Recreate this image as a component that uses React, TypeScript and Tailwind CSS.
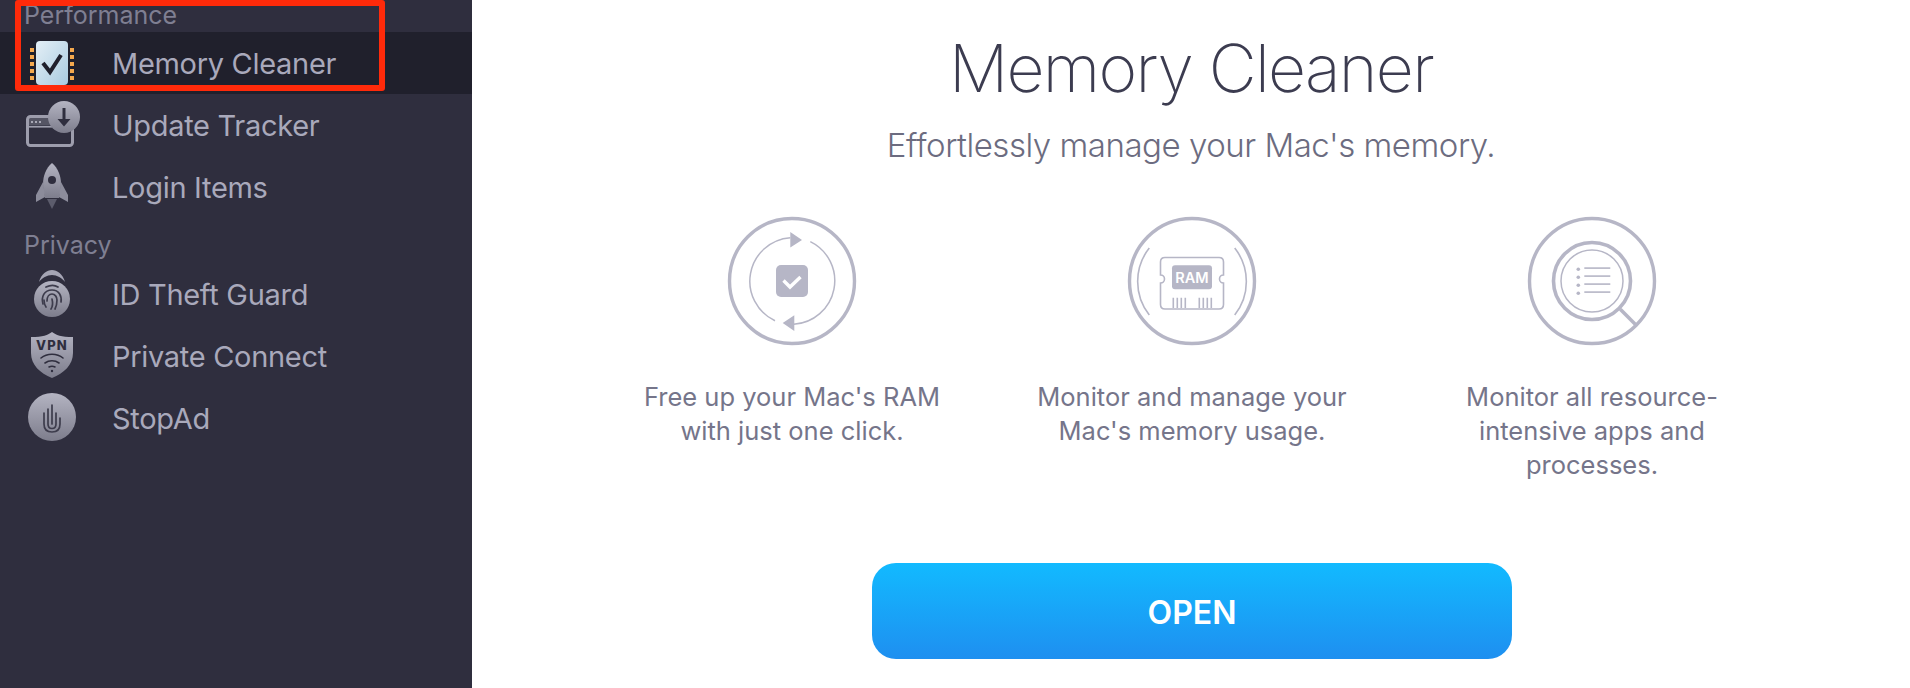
import React from 'react';

const iconGrey = '#b6b6c6';

function Defs() {
  return (
    <svg width="0" height="0" className="absolute">
      <defs>
        <linearGradient id="metal" x1="0" y1="0" x2="0" y2="1">
          <stop offset="0" stopColor="#b4b4c2" />
          <stop offset="1" stopColor="#7d7d8c" />
        </linearGradient>
        <linearGradient id="chip" x1="0" y1="0" x2="1" y2="1">
          <stop offset="0" stopColor="#e4eff6" />
          <stop offset="1" stopColor="#a9cbe0" />
        </linearGradient>
      </defs>
    </svg>
  );
}

function MemoryIcon() {
  return (
    <svg width="64" height="64" viewBox="0 0 64 64">
      {[19, 26, 33, 40, 47].map((y) => (
        <g key={y} fill="#f5a94e">
          <rect x="10" y={y - 2} width="4" height="4" />
          <rect x="50" y={y - 2} width="4" height="4" />
        </g>
      ))}
      <rect x="16" y="10" width="32" height="44" rx="4" fill="url(#chip)" />
      <path d="M23 32l7 9 11-17" fill="none" stroke="#20202c" strokeWidth="4" />
    </svg>
  );
}

function UpdateIcon() {
  return (
    <svg width="64" height="64" viewBox="0 0 64 64">
      <rect x="7.500" y="23.500" width="45" height="29" rx="3" fill="none" stroke="#9d9dac" strokeWidth="3" />
      <rect x="7.500" y="23.500" width="24" height="9" fill="#9d9dac" opacity="0.35" />
      <path d="M11 29h2m2 0h2m2 0h2" stroke="#c4c4d0" strokeWidth="1.400" />
      <rect x="7" y="33" width="25" height="1.600" fill="#9d9dac" />
      <circle cx="44" cy="24" r="16" fill="url(#metal)" />
      <path d="M44 15v15" stroke="#2f2e3e" strokeWidth="3" />
      <path d="M37.500 26l6.500 7.500 6.500-7.500z" fill="#2f2e3e" />
    </svg>
  );
}

function RocketIcon() {
  return (
    <svg width="64" height="64" viewBox="0 0 64 64">
      <path d="M32 8c-6 5-9 13-9 21 0 5 1 10 2 14h14c1-4 2-9 2-14 0-8-3-16-9-21z" fill="url(#metal)" />
      <path d="M23 27L16 40v7l9-5zM41 27l7 13v7l-9-5z" fill="#8c8c9b" />
      <path d="M27 44h10l-5 10z" fill="#5c5c6c" />
      <circle cx="32" cy="25" r="4" fill="#2f2e3e" />
    </svg>
  );
}

function GuardIcon() {
  return (
    <svg width="64" height="64" viewBox="0 0 64 64">
      <path d="M19 20c2-8 8-12 13-12s11 4 13 12c-3-4-8-7-13-7s-10 3-13 7z" fill="#a5a5b4" />
      <circle cx="32" cy="37" r="18" fill="url(#metal)" />
      <g fill="none" stroke="#3d3c4c" strokeWidth="1.700" strokeLinecap="round">
        <path d="M23 42c-2-7 1-14 9-14 7 0 10 6 9 12" />
        <path d="M26 45c-2-3-2-5-2-7" />
        <path d="M27 39c0-4 2-7 5-7s5 3 5 6c0 4-1 7-2 9" />
        <path d="M31 47c2-3 2-6 1-10" />
        <path d="M26 25c4-2 9-2 12 0" />
      </g>
    </svg>
  );
}

function VpnIcon() {
  return (
    <svg width="64" height="64" viewBox="0 0 64 64">
      <path d="M32 8c4 3 9 5 21 5v16c0 12-9 20-21 25-12-5-21-13-21-25V13c12 0 17-2 21-5z" fill="url(#metal)" />
      <text x="32" y="26" textAnchor="middle" fontSize="13" fontWeight="800" letterSpacing="1.200" fill="#2f2e3e" style={{ fontFamily: 'Inter, sans-serif' }}>
        VPN
      </text>
      <g fill="none" stroke="#2f2e3e" strokeWidth="1.600" strokeLinecap="round">
        <path d="M21 34c6-5 16-5 22 0" />
        <path d="M25 39c4-3 10-3 14 0" />
        <path d="M29 43c2-1 4-1 6 0" />
      </g>
      <circle cx="32" cy="47" r="1.200" fill="#2f2e3e" />
    </svg>
  );
}

function StopAdIcon() {
  return (
    <svg width="64" height="64" viewBox="0 0 64 64">
      <circle cx="32" cy="31" r="24" fill="url(#metal)" />
      <g fill="none" stroke="#3d3c4c" strokeWidth="1.700" strokeLinecap="round">
        <path d="M24 27v11c0 5 3 8 8 8s8-3 8-8v-6" />
        <path d="M28 23v15c0 3 2 4.500 4 4.500s4-1.500 4-4.500v-11" />
        <path d="M32 19v19" />
      </g>
    </svg>
  );
}

function RingIcon({ children }: { children: React.ReactNode }) {
  return (
    <svg width="132" height="132" viewBox="-66 -66 132 132" className="shrink-0">
      <circle r="62.500" fill="none" stroke={iconGrey} strokeWidth="3.400" />
      {children}
    </svg>
  );
}

function CleanIcon() {
  return (
    <RingIcon>
      <g fill="none" stroke={iconGrey} strokeWidth="1.500">
        <path d="M-1.700-43.300A43.600 43.600 0 0 0-17 39.700" />
        <path d="M18.300-39.400A43.600 43.600 0 0 1 1.700 43.300" />
      </g>
      <path d="M-1.700-49L10-41-1.700-33.500zM2.300 34.300V50L-9.300 42z" fill={iconGrey} />
      <rect x="-16" y="-16" width="32" height="32" rx="5" fill={iconGrey} />
      <path d="M-8.500-.5L-2 6 8.500-4" fill="none" stroke="#fff" strokeWidth="3.400" />
    </RingIcon>
  );
}

function RamIcon() {
  return (
    <RingIcon>
      <g fill="none" stroke={iconGrey} strokeWidth="1.600">
        <path d="M-42.700-33A54 54 0 0 0-42.700 34" />
        <path d="M42.700-33A54 54 0 0 1 42.700 34" />
        <path d="M-27-23.500H27Q31.500-23.500 31.500-19V-6A4 4 0 0 0 31.500 2V23.500Q31.500 28 27 28H-27Q-31.500 28-31.500 23.500V2A4 4 0 0 0-31.500-6V-19Q-31.500-23.500-27-23.500Z" />
        <path d="M-18.700 16.700V27M-14.700 16.700V27M-10.700 16.700V27M-6.700 16.700V27M7.300 16.700V27M11.300 16.700V27M15.300 16.700V27M19.300 16.700V27" />
      </g>
      <rect x="-20" y="-15.700" width="40" height="24" rx="3" fill={iconGrey} />
      <text x="0" y="1.500" textAnchor="middle" fontSize="14.500" fontWeight="600" fill="#fff" style={{ fontFamily: 'Inter, sans-serif' }}>
        RAM
      </text>
    </RingIcon>
  );
}

function ProcessIcon() {
  return (
    <RingIcon>
      <circle r="38.500" fill="none" stroke={iconGrey} strokeWidth="3.600" />
      <circle r="31" fill="none" stroke={iconGrey} strokeWidth="1.500" />
      <path d="M28.300 28.300L43.500 43.500" stroke={iconGrey} strokeWidth="3.600" />
      {[-13, -5, 3, 11].map((y) => (
        <g key={y}>
          <circle cx="-13.700" cy={y + 1.300} r="1.800" fill={iconGrey} />
          <rect x="-7.700" y={y - 0.700} width="26" height="1.600" fill={iconGrey} />
        </g>
      ))}
    </RingIcon>
  );
}

function NavItem({ icon, label, active }: { icon: React.ReactNode; label: string; active?: boolean }) {
  return (
    <div className={`flex h-[62px] items-center pl-5 ${active ? 'bg-[#20202c]' : ''}`}>
      <div className="h-16 w-16 shrink-0">{icon}</div>
      <span className="mt-[2px] ml-[28px] text-[29px] tracking-[-0.3px] text-[#a9a9bb]">{label}</span>
    </div>
  );
}

function Feature({ icon, children }: { icon: React.ReactNode; children: React.ReactNode }) {
  return (
    <div className="flex w-[400px] flex-col items-center">
      {icon}
      <p className="mt-[33px] text-center text-[25.500px] leading-[34px] text-[#75758a]">{children}</p>
    </div>
  );
}

export default function App() {
  return (
    <div className="relative flex h-[688px] w-[1910px] overflow-hidden bg-white" style={{ fontFamily: 'Inter, sans-serif' }}>
      <Defs />
      {/* Sidebar */}
      <aside className="w-[472px] shrink-0 bg-[#2f2e3e]">
        <div className="flex h-8 items-center pl-6 text-[25px] text-[#7f7f92]">Performance</div>
        <NavItem icon={<MemoryIcon />} label="Memory Cleaner" active />
        <NavItem icon={<UpdateIcon />} label="Update Tracker" />
        <NavItem icon={<RocketIcon />} label="Login Items" />
        <div className="mt-[11px] flex h-[34px] items-center pl-6 text-[25px] text-[#7f7f92]">Privacy</div>
        <NavItem icon={<GuardIcon />} label="ID Theft Guard" />
        <NavItem icon={<VpnIcon />} label="Private Connect" />
        <NavItem icon={<StopAdIcon />} label="StopAd" />
      </aside>

      {/* Main panel */}
      <main className="flex flex-1 flex-col items-center">
        <h1 className="mt-[23px] text-[66px] leading-[90px] font-extralight tracking-[-1.7px] text-[#3c3c50]">Memory Cleaner</h1>
        <p className="mt-[10px] text-[33px] leading-[44px] font-light tracking-[-0.47px] text-[#6c6c80]">Effortlessly manage your Mac's memory.</p>
        <div className="mt-[48px] ml-[2px] flex">
          <Feature icon={<CleanIcon />}>
            Free up your Mac's RAM
            <br />
            with just one click.
          </Feature>
          <Feature icon={<RamIcon />}>
            Monitor and manage your
            <br />
            Mac's memory usage.
          </Feature>
          <Feature icon={<ProcessIcon />}>
            Monitor all resource-
            <br />
            intensive apps and
            <br />
            processes.
          </Feature>
        </div>
        <button className="mt-[81px] ml-[2px] flex h-[96px] w-[640px] shrink-0 items-center justify-center rounded-[24px] bg-gradient-to-b from-[#12baff] to-[#1e8ff0] pt-[3px] text-[32px] font-semibold text-white">
          OPEN
        </button>
      </main>

      {/* Red annotation box */}
      <div className="absolute top-0 left-[15px] h-[91px] w-[370px] rounded-[3px] border-[6px] border-[#ff2a0a]" />
    </div>
  );
}
